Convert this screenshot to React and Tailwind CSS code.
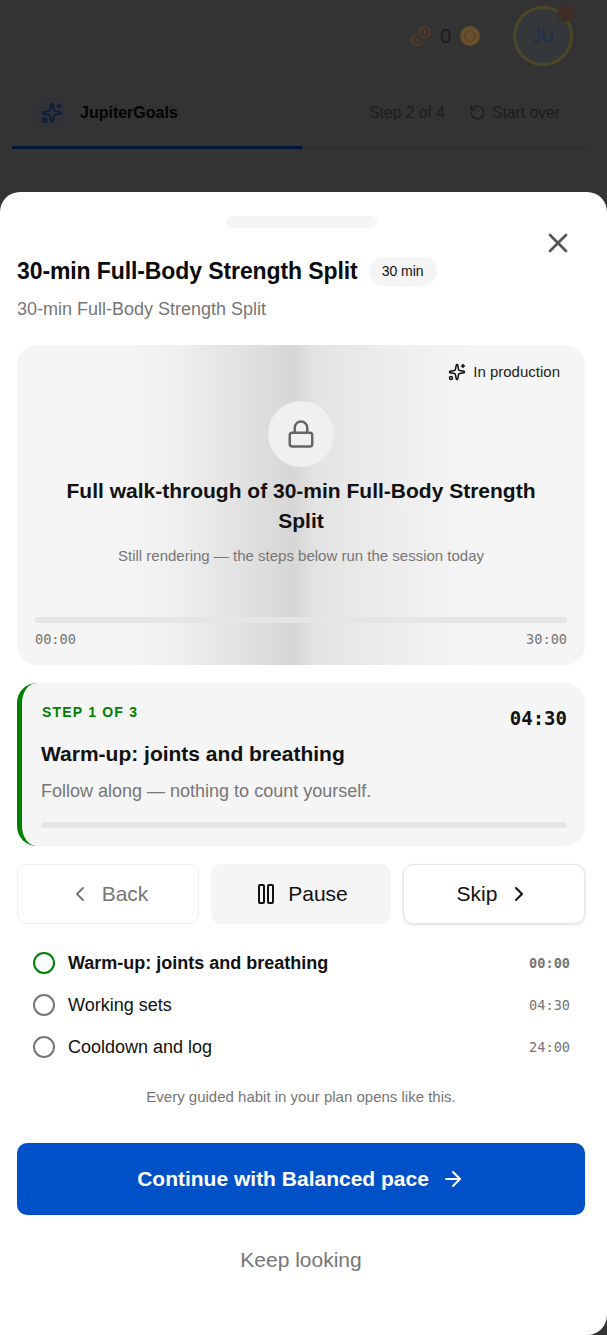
import React from "react";
import { Sparkles, Coins, RotateCcw, X, Lock, ChevronLeft, ChevronRight, Pause, ArrowRight } from "lucide-react";

function Background() {
  return (
    <div>
      <div className="flex h-[76px] items-center justify-end gap-[14px] pb-[4px] pr-[34px]">
        <div className="flex h-[47px] w-[108px] items-center justify-center rounded-[24px] border border-[#373737]">
          <Coins className="h-[22px] w-[22px] -scale-x-100 text-[#5a3a26]" strokeWidth={2} />
          <span className="ml-[8px] text-[20px] leading-none text-[#1a1a1a]">0</span>
          <span className="ml-[9px] flex h-[20px] w-[20px] items-center justify-center rounded-full bg-[#66502e]">
            <span className="h-[12px] w-[12px] rounded-full border-2 border-[#5c4629]" />
          </span>
        </div>
        <div className="relative flex h-[60px] w-[60px] items-center justify-center rounded-full border-[3px] border-[#4c4726] bg-[#34383b] text-[18px] text-[#1c2f4f]">
          JU
          <span className="absolute -right-[4px] -top-[4px] h-[17px] w-[17px] rounded-full bg-[#3e2d25]" />
        </div>
      </div>
      <div className="flex h-[70px] items-center justify-between pl-[35px] pr-[47px] pt-[4px]">
        <div className="flex items-center gap-[12px]">
          <div className="flex h-[32px] w-[33px] items-center justify-center rounded-[8px] bg-[#303236]">
            <Sparkles className="h-[22px] w-[22px] text-[#0a1f3e]" strokeWidth={2} />
          </div>
          <span className="text-[16px] font-bold text-[#030303]">JupiterGoals</span>
        </div>
        <div className="flex items-center gap-[24px] text-[15.7px] text-[#1c1c1c]">
          <span>Step 2 of 4</span>
          <span className="flex items-center gap-[6px]">
            <RotateCcw className="h-[17px] w-[17px]" strokeWidth={2} />
            Start over
          </span>
        </div>
      </div>
      <div className="ml-[12px] mr-[16px] h-[3px] bg-[#303030]">
        <div className="h-full w-1/2 bg-[#00163a]" />
      </div>
    </div>
  );
}

function Track({ className = "" }) {
  return <div className={`h-[6px] rounded-full bg-[#e5e5e5] ${className}`} />;
}

function StepRow({ label, time, active }) {
  return (
    <div className="flex h-[42px] items-center pl-[16px] pr-[15px]">
      <span className={`h-[22px] w-[22px] rounded-full border-2 ${active ? "border-[#008000]" : "border-[#767676]"}`} />
      <span className={`ml-[13px] flex-1 text-[18px] text-[#111111] ${active ? "font-bold" : ""}`}>{label}</span>
      <span className={`font-['DejaVu_Sans_Mono',monospace] text-[13.6px] text-[#767676] ${active ? "font-bold" : ""}`}>{time}</span>
    </div>
  );
}

export default function App() {
  return (
    <div className="relative h-[1335px] w-full overflow-hidden bg-[#333333] font-['Liberation_Sans',Arial,sans-serif]">
      <Background />
      <div className="absolute inset-x-0 bottom-0 top-[192px] rounded-t-[20px] rounded-br-[20px] bg-white pl-[17px] pr-[22px]">
        <div className="mx-auto mt-[24px] h-[12px] w-[151px] rounded-full bg-[#f5f5f5]" />
        <button className="absolute right-[33px] top-[35px] text-[#555555]">
          <X className="h-[32px] w-[32px]" strokeWidth={2} />
        </button>
        <div className="mt-[28px] flex items-center gap-[11px]">
          <h2 className="text-[23px] font-bold leading-[30px] tracking-[-0.1px] text-[#0a0a0a]">30-min Full-Body Strength Split</h2>
          <span className="flex h-[29px] items-center rounded-full bg-[#f5f5f5] px-[13px] text-[14px] text-[#111111]">30 min</span>
        </div>
        <p className="mt-[10px] text-[18px] leading-[26px] text-[#767676]">30-min Full-Body Strength Split</p>

        <div className="relative mt-[23px] h-[320px] overflow-hidden rounded-[20px] bg-[linear-gradient(90deg,#f5f5f5_20%,#eeeeee_29%,#e0e0e0_41%,#d6d6d6_48.5%,#e4e4e4_53%,#ededed_66%,#f5f5f5_80%)] px-[18px]">
          <div className="absolute right-[25px] top-[16px] flex items-center gap-[7px] text-[15px] text-[#222222]">
            <Sparkles className="h-[18px] w-[18px] text-[#111111]" strokeWidth={2} />
            In production
          </div>
          <div className="mx-auto mt-[56px] flex h-[66px] w-[66px] items-center justify-center rounded-full bg-[#f0f0f0]">
            <Lock className="h-[30px] w-[30px] text-[#666666]" strokeWidth={2} />
          </div>
          <h3 className="mx-auto mt-[9px] max-w-[480px] text-center text-[21px] font-bold leading-[30px] text-[#111111]">Full walk-through of 30-min Full-Body Strength Split</h3>
          <p className="mt-[10px] text-center text-[15px] leading-[20px] text-[#767676]">Still rendering — the steps below run the session today</p>
          <Track className="mt-[51px]" />
          <div className="mt-[7px] flex justify-between font-['DejaVu_Sans_Mono',monospace] text-[13.6px] leading-[18px] text-[#767676]">
            <span>00:00</span>
            <span>30:00</span>
          </div>
        </div>

        <div className="mt-[18px] h-[163px] rounded-[20px] border-l-[5px] border-[#008000] bg-[#f5f5f5] pl-[19px] pr-[18px]">
          <div className="flex justify-between">
            <span className="mt-[20px] pl-[1px] text-[14px] font-bold leading-[18px] tracking-[1.2px] text-[#008000]">STEP 1 OF 3</span>
            <span className="mt-[24px] font-['DejaVu_Sans_Mono',monospace] text-[19px] font-bold leading-[22px] text-[#111111]">04:30</span>
          </div>
          <div className="mt-[10px] text-[21px] font-bold leading-[30px] text-[#111111]">Warm-up: joints and breathing</div>
          <div className="mt-[9px] text-[18px] leading-[26px] text-[#767676]">Follow along — nothing to count yourself.</div>
          <Track className="mt-[18px]" />
        </div>

        <div className="mt-[18px] flex gap-[12px]">
          <button className="flex h-[60px] w-[182px] items-center justify-center gap-[10px] rounded-[10px] border border-[#eeeeee] bg-white text-[21px] text-[#767676]">
            <ChevronLeft className="h-[24px] w-[24px]" strokeWidth={2} />
            Back
          </button>
          <button className="flex h-[60px] w-[180px] items-center justify-center gap-[10px] rounded-[10px] bg-[#f5f5f5] text-[21px] text-[#111111]">
            <Pause className="h-[24px] w-[24px]" strokeWidth={2} />
            Pause
          </button>
          <button className="flex h-[60px] w-[182px] items-center justify-center gap-[10px] rounded-[10px] border border-[#e5e5e5] bg-white text-[21px] text-[#111111] shadow-[0_1px_3px_rgba(0,0,0,0.12)]">
            Skip
            <ChevronRight className="h-[24px] w-[24px]" strokeWidth={2} />
          </button>
        </div>

        <div className="mt-[18px]">
          <StepRow label="Warm-up: joints and breathing" time="00:00" active />
          <StepRow label="Working sets" time="04:30" />
          <StepRow label="Cooldown and log" time="24:00" />
        </div>

        <p className="mt-[19px] text-center text-[15px] leading-[20px] text-[#767676]">Every guided habit in your plan opens like this.</p>

        <button className="mt-[36px] flex h-[72px] w-full items-center justify-center gap-[12px] rounded-[10px] bg-[#0050c8] text-[21px] font-bold text-white">
          Continue with Balanced pace
          <ArrowRight className="h-[24px] w-[24px]" strokeWidth={2} />
        </button>
        <div className="mt-[30px] text-center text-[21px] leading-[30px] text-[#767676]">Keep looking</div>
      </div>
    </div>
  );
}
